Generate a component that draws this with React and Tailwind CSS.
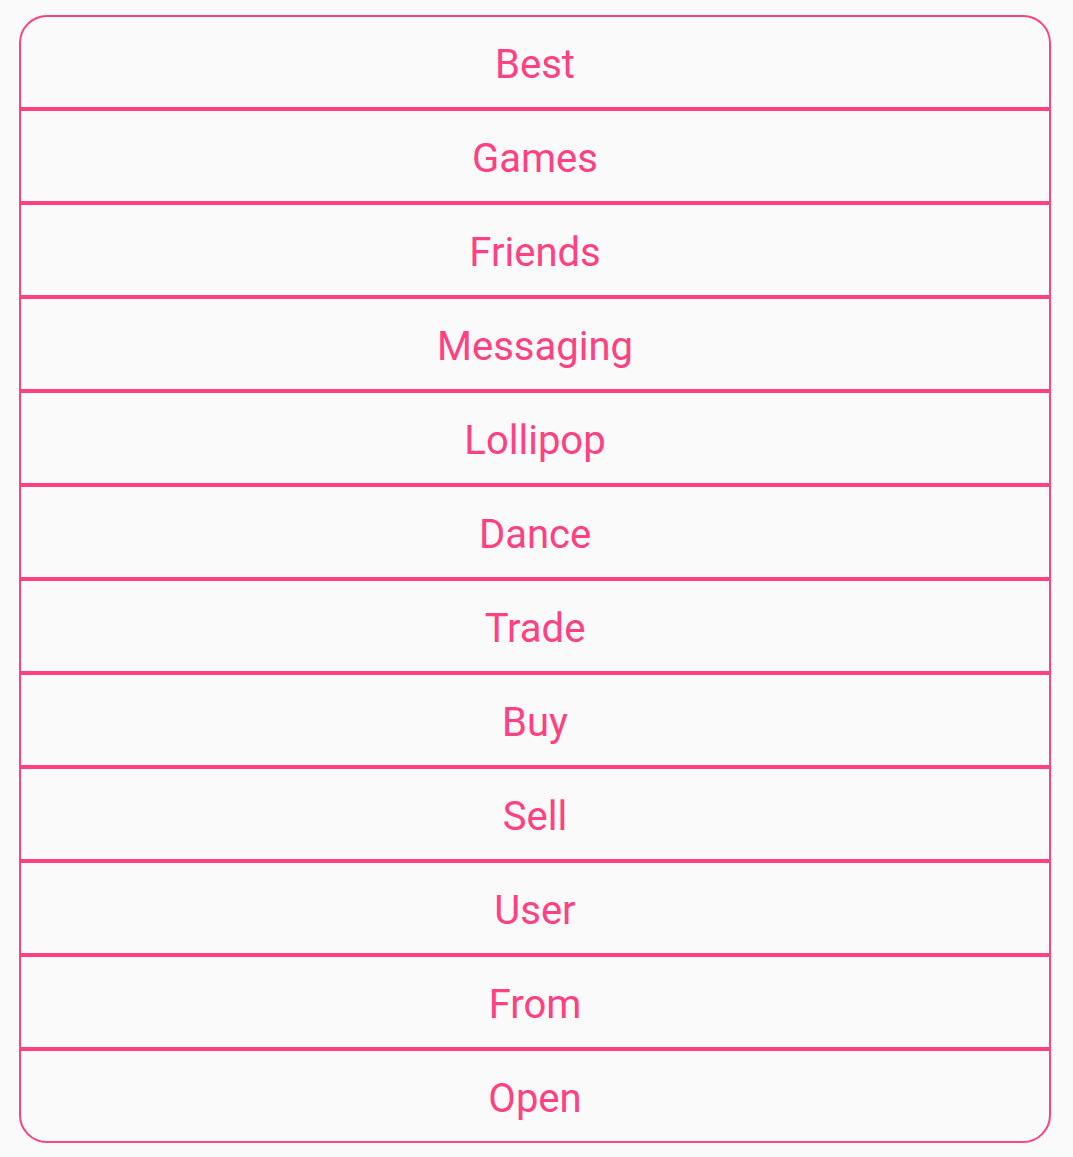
export default function App() {
  const items = ["Best","Games","Friends","Messaging","Lollipop","Dance","Trade","Buy","Sell","User","From","Open"];
  return (
    <div className="min-h-[1157px] w-full bg-[#fafafa] pt-[15px] pl-[19px] pr-[22px]" style={{fontFamily: "Roboto, sans-serif"}}>
      <div className="w-[1032px] border-2 border-[#ff4081] rounded-[28px] overflow-hidden flex flex-col">
        {items.map((t, i) => (
          <div
            key={t}
            className={
              (i === items.length - 1 ? "h-[90px] " : "h-[94px] border-b-4 border-[#ff4081] ") +
              "flex items-center justify-center pt-[6px] text-[40px] text-[#ff4081] leading-none"
            }
          >
            {t}
          </div>
        ))}
      </div>
    </div>
  );
}
